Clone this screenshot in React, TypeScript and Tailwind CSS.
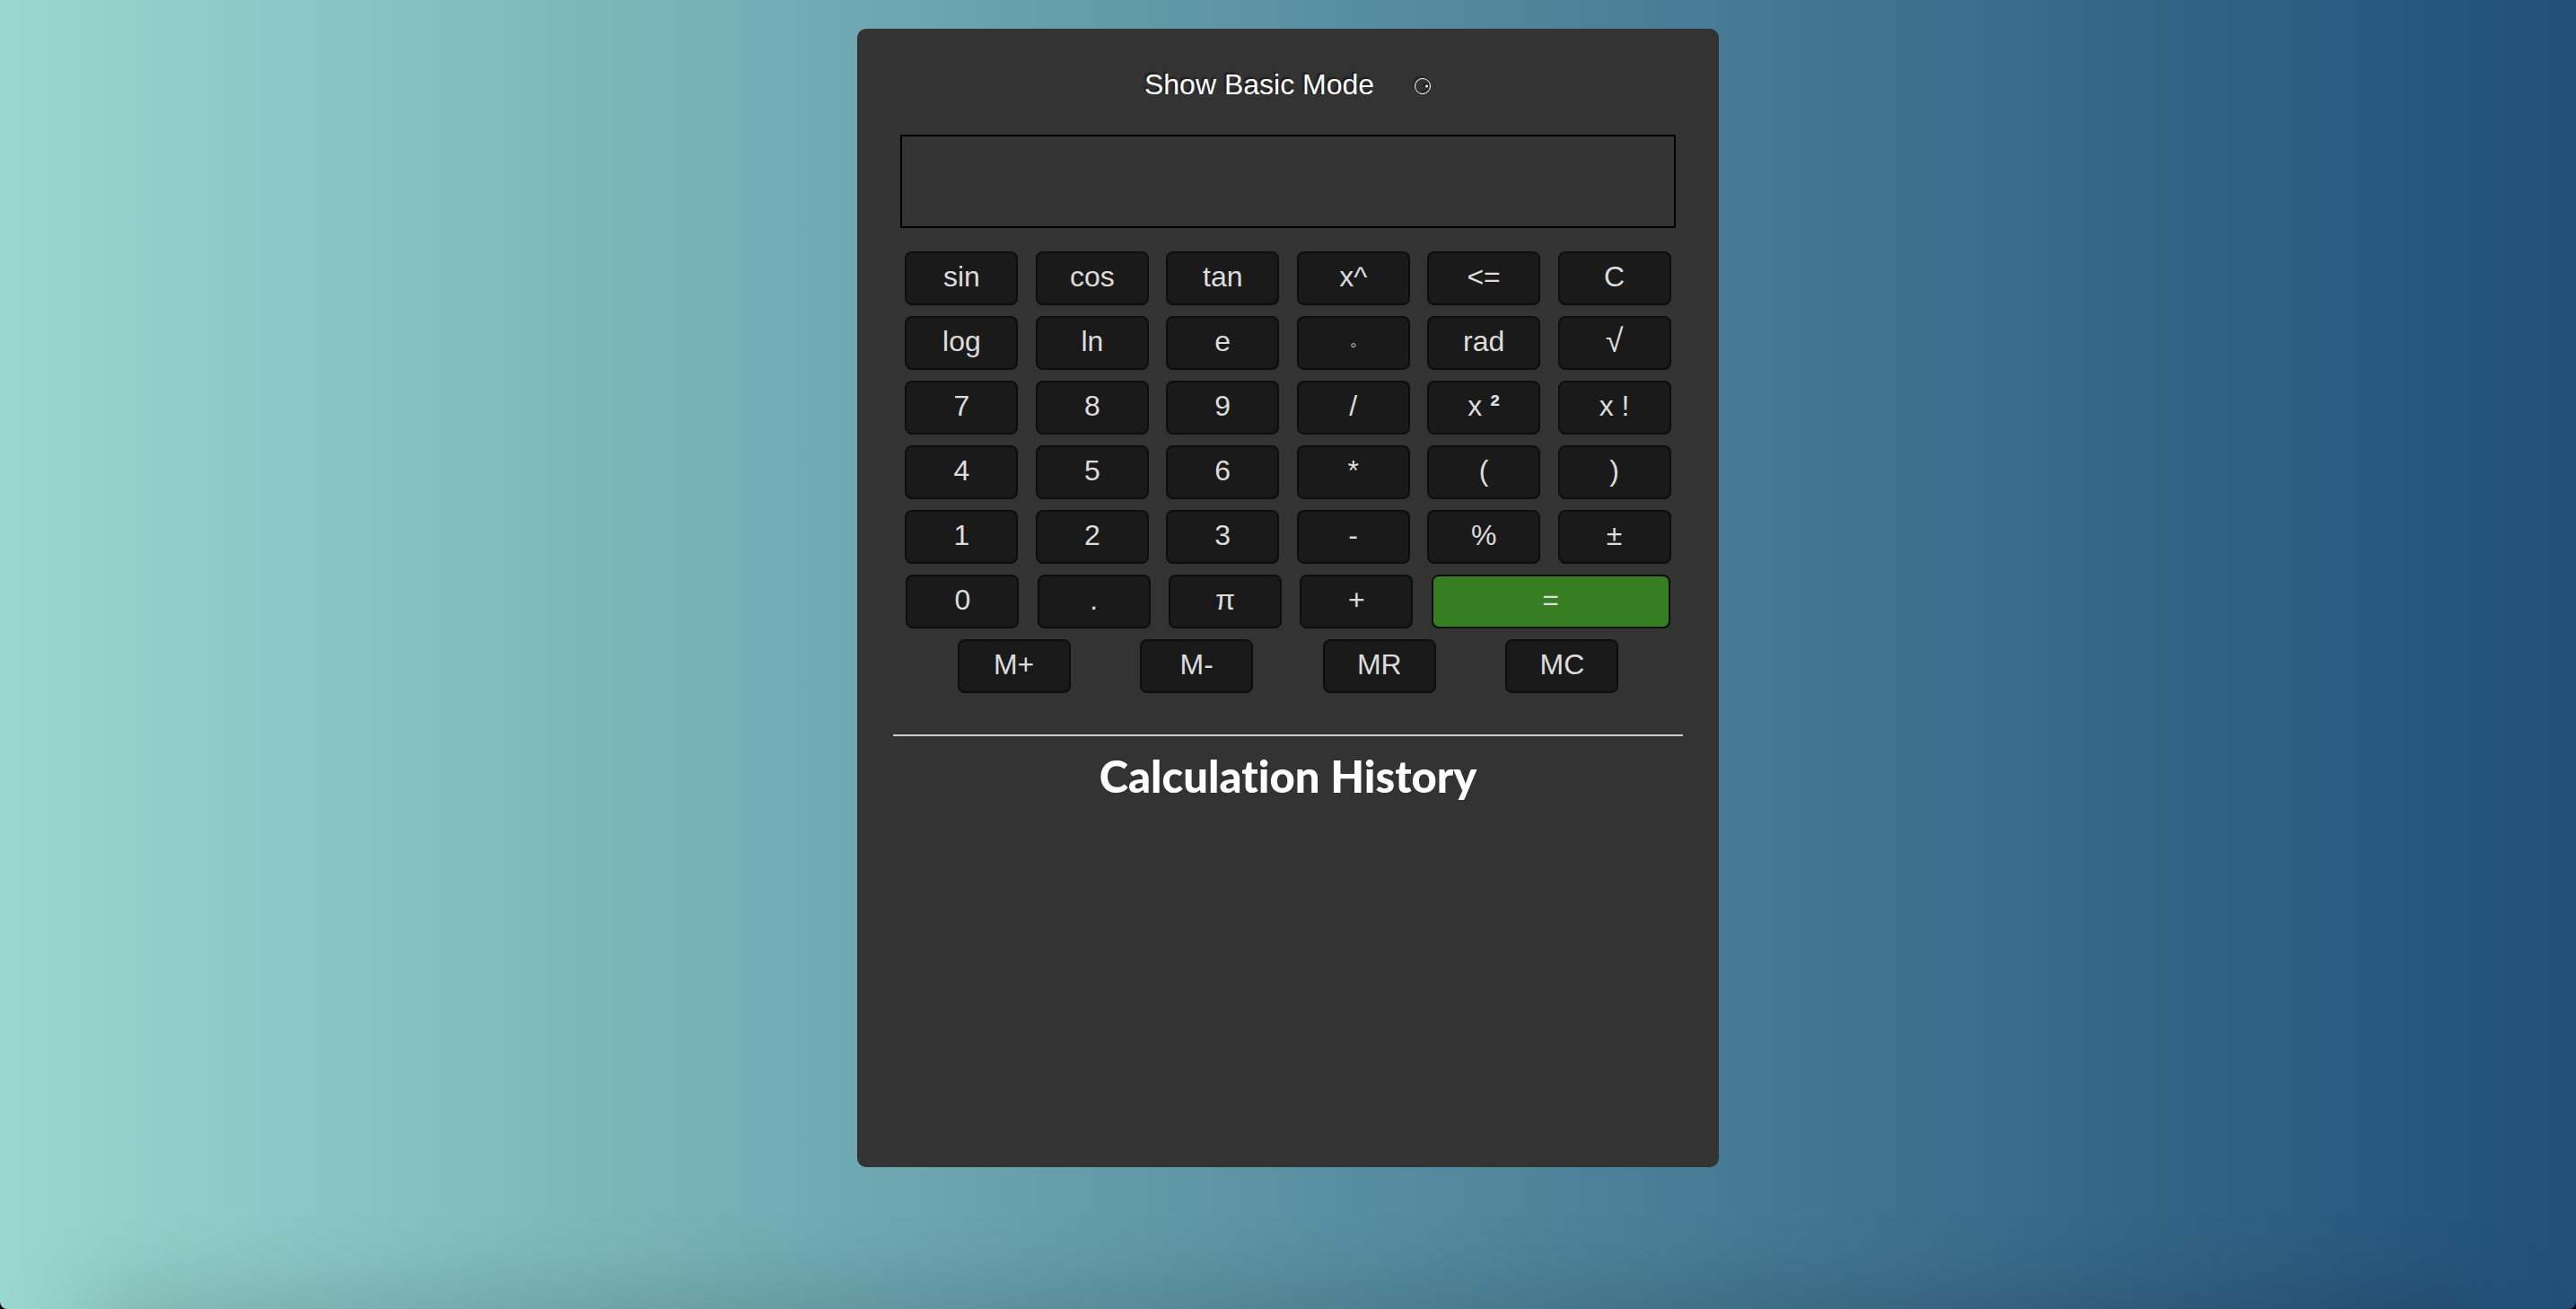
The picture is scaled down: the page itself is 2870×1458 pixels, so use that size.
import { useState } from "react";
import type { ReactNode } from "react";

type Key = { label: string; name?: string; wide?: boolean; face?: ReactNode };

const rows: Key[][] = [
  [{ label: "sin" }, { label: "cos" }, { label: "tan" }, { label: "x^" }, { label: "<=", name: "backspace" }, { label: "C" }],
  [
    { label: "log" },
    { label: "ln" },
    { label: "e" },
    { label: "◦", name: "degrees", face: <span className="text-xl leading-none">◦</span> },
    { label: "rad" },
    { label: "√", name: "square root", face: <span className="text-4xl leading-none">√</span> },
  ],
  [
    { label: "7" },
    { label: "8" },
    { label: "9" },
    { label: "/" },
    { label: "x ²", name: "square", face: <>x <span className="font-bold">²</span></> },
    { label: "x !" },
  ],
  [{ label: "4" }, { label: "5" }, { label: "6" }, { label: "*" }, { label: "(" }, { label: ")" }],
  [{ label: "1" }, { label: "2" }, { label: "3" }, { label: "-" }, { label: "%" }, { label: "±" }],
  [{ label: "0" }, { label: "." }, { label: "π" }, { label: "+" }, { label: "=", wide: true }],
  [{ label: "M+" }, { label: "M-" }, { label: "MR" }, { label: "MC" }],
];

function CalcKey({ label, name, wide, face }: Key) {
  return (
    <button
      type="button"
      aria-label={name}
      className={
        "h-15 rounded-lg border-2 border-[#0d0d0d] pb-1 text-[32px] leading-none text-[#dcdcdc] " +
        (wide ? "w-[266px] bg-[#377d22]" : "w-[126px] bg-[#1a1a1a]")
      }
    >
      {face ?? label}
    </button>
  );
}

export default function App() {
  const [value, setValue] = useState("");

  return (
    <div className="min-h-screen bg-black font-['Liberation_Sans',Arial,sans-serif]">
      <div className="relative min-h-screen overflow-hidden rounded-b-lg bg-linear-to-r from-[#9ad7ce] to-[#214f78] px-4 pt-8">
        <main className="relative z-10 mx-auto flex min-h-[1268px] w-full max-w-[960px] flex-col items-center rounded-[10px] bg-[#333333] px-[34px] pt-10">
          <div className="flex h-11 items-center gap-11 text-[32px] text-white">
            <span id="mode-label" className="[text-shadow:-2px_-2px_2px_#1a1a1a]">Show Basic Mode</span>
            <button type="button" aria-labelledby="mode-label">
              <svg className="mt-1 size-5 overflow-visible" viewBox="0 0 20 20" fill="none">
                <circle cx="8" cy="8" r="8.5" stroke="#222222" strokeWidth="2" />
                <circle cx="10" cy="10" r="8.5" stroke="#ffffff" strokeWidth="1" />
                <circle cx="13.5" cy="9" r="3" fill="#222222" />
                <circle cx="14.5" cy="10" r="1.5" fill="#ffffff" />
              </svg>
            </button>
          </div>

          <input
            type="text"
            aria-label="Display"
            value={value}
            onChange={(e) => setValue(e.target.value)}
            className="mt-[34px] h-[104px] w-[864px] max-w-full border-2 border-black bg-transparent px-4 text-right text-5xl text-white outline-none"
          />

          <div className="mt-[26px] flex w-full flex-col gap-3">
            {rows.map((row, i) => (
              <div key={i} className="flex justify-evenly">
                {row.map((k) => (
                  <CalcKey key={k.label} {...k} />
                ))}
              </div>
            ))}
          </div>

          <section className="mt-[46px] w-[880px] max-w-full border-t-2 border-[#cccccc] pt-[14px] text-center">
            <h2 className="font-['Lato',sans-serif] text-[49px] leading-[60px] font-black text-white [font-variant-ligatures:none]">
              Calculation History
            </h2>
          </section>
        </main>
        <div className="pointer-events-none absolute inset-x-[100px] top-full h-10 shadow-[0_10px_100px_0_rgba(0,0,0,0.35)]" />
      </div>
    </div>
  );
}
